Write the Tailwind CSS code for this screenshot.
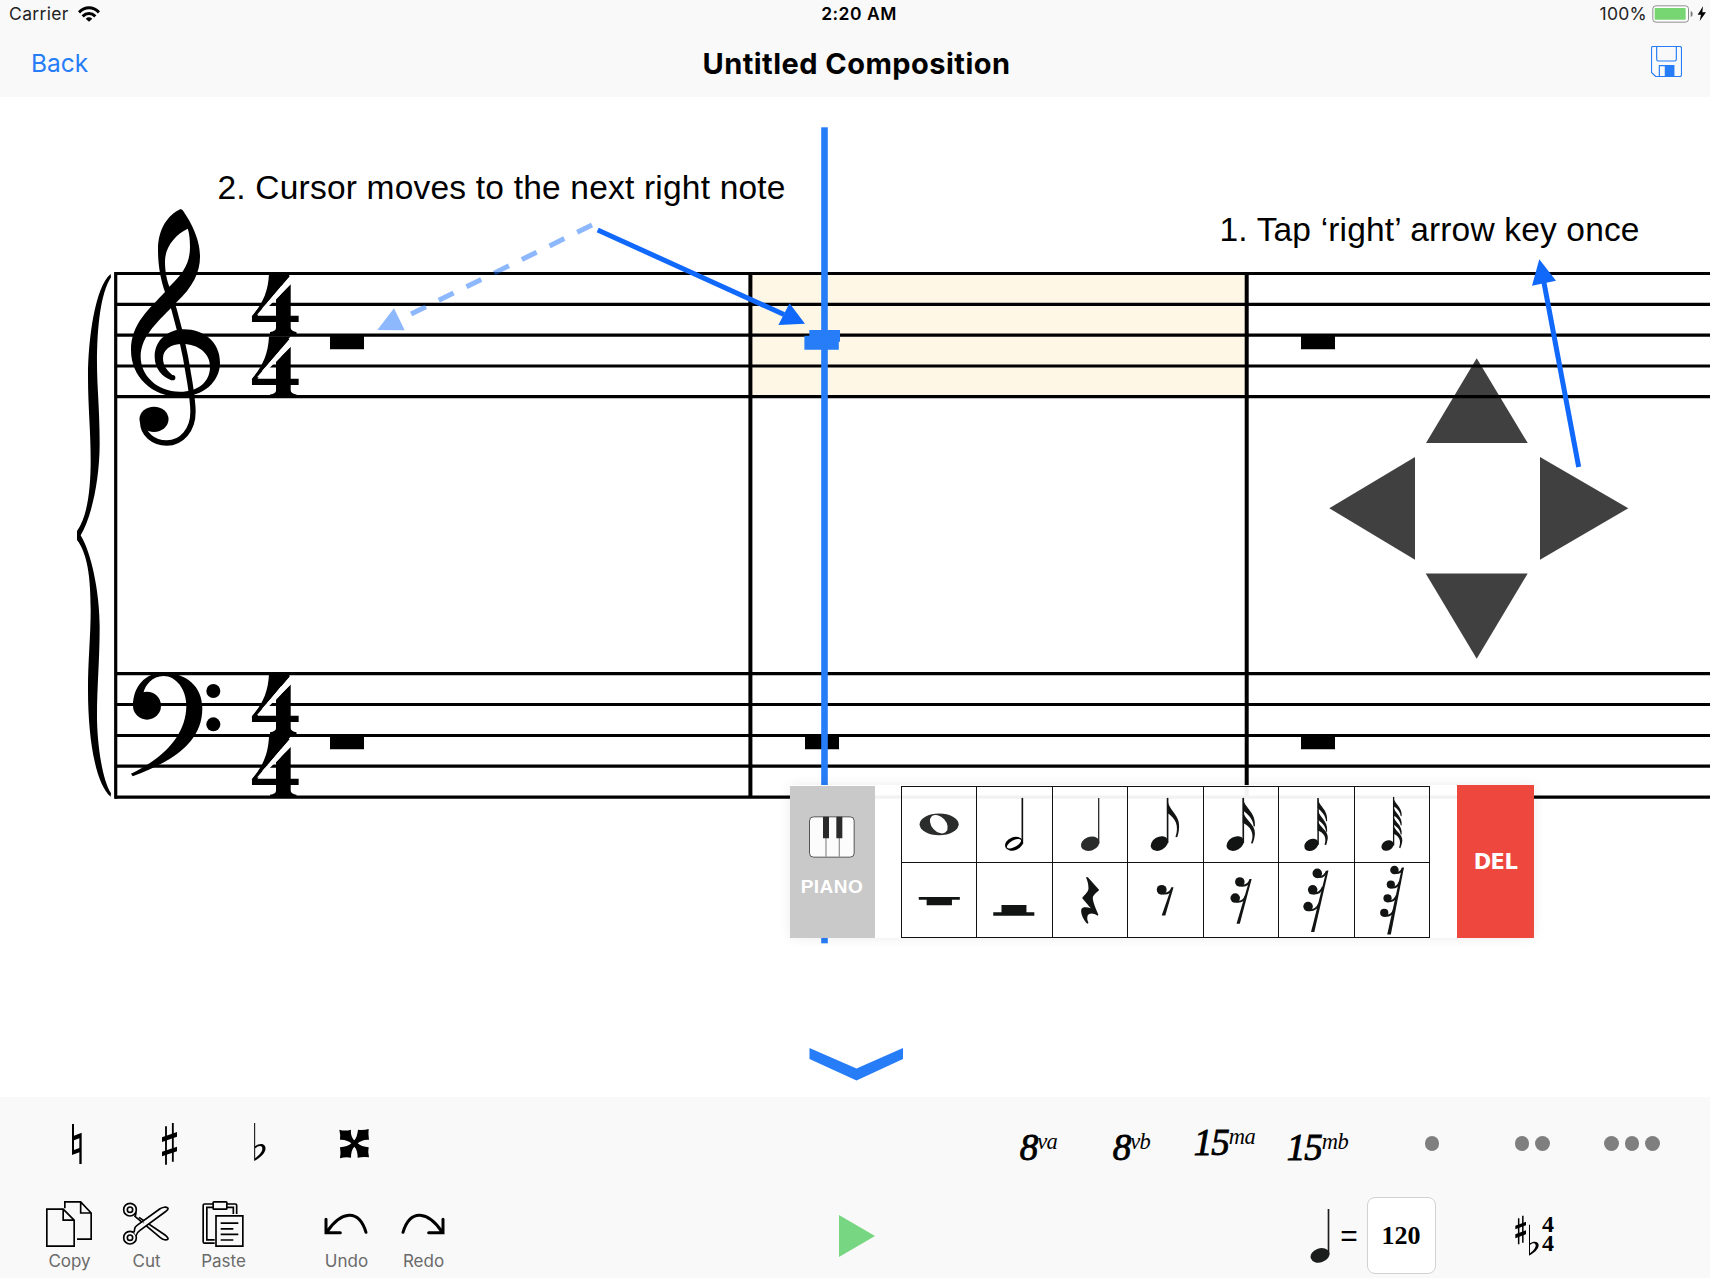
<!DOCTYPE html>
<html lang="en">
<head>
<meta charset="utf-8">
<title>Untitled Composition</title>
<script src="https://cdn.jsdelivr.net/npm/@tailwindcss/browser@4"></script>
</head>
<body class="flex h-[1278px] w-[1710px] flex-col overflow-hidden bg-white font-['Inter',sans-serif] text-black">

<header class="flex h-[97px] flex-none flex-col bg-[#f9f9f9]">
  <div class="grid h-7 grid-cols-3 items-center pl-[9px] pr-[4px] text-[18px] leading-none">
    <div class="flex items-center gap-[9px]">
      <span class="text-[17.5px] tracking-[0.35px] text-[#222]">Carrier</span>
      <svg class="h-[16px] w-[22px]" viewBox="233 16 66 48" fill="none" stroke="#000" stroke-width="9">
        <path d="M236 35 C254 17 278 17 296 35"/><path d="M247 47 C258 36 274 36 285 47"/>
        <path d="M256 54 Q266 46 276 54 L266 63Z" fill="#000" stroke="none"/>
      </svg>
    </div>
    <span class="pl-[3px] text-center text-[17.5px] font-semibold tracking-[0.5px]">2:20 AM</span>
    <div class="flex items-center justify-end gap-[5px]">
      <span class="text-[17.5px] tracking-[0.25px] text-[#222]">100%</span>
      <svg class="h-[18px] w-[54px]" viewBox="1114 15 162 54">
        <rect x="1116.500" y="17.500" width="107" height="49" rx="9" fill="#fff" stroke="#8d8d8d" stroke-width="3"/>
        <rect x="1122" y="24" width="93" height="35" rx="2" fill="#77d572"/>
        <path d="M1230 33 Q1236 35 1236 42 Q1236 49 1230 51Z" fill="#777"/>
        <path d="M1267 19 L1251 44 H1261 L1257 63 L1276 37 H1265Z" fill="#000"/>
      </svg>
    </div>
  </div>
  <div class="grid h-[69px] grid-cols-3 items-center pl-[31px] pr-[28px] pt-[2px]">
    <a class="text-[24.500px] text-[#277df7]">Back</a>
    <h1 class="text-center text-[29px] font-bold whitespace-nowrap tracking-[0.45px]">Untitled Composition</h1>
    <svg class="-mt-[4px] h-[31px] w-[31px] justify-self-end" viewBox="1113 138 93 93" fill="none" stroke="#277df7" stroke-width="3.500">
      <path d="M1119 139.500 H1199 Q1204.500 139.500 1204.500 145 V224 Q1204.500 229.500 1199 229.500 H1127 L1114.500 217 V145 Q1114.500 139.500 1119 139.500Z"/>
      <path d="M1130 140 V178 Q1130 183 1135 183 H1184 Q1189 183 1189 178 V140"/>
      <path d="M1138 229 V197 H1181 V229"/><path d="M1156 197 H1181 V229 H1156Z" fill="#277df7"/>
    </svg>
  </div>
</header>

<main class="relative h-[1000px] flex-none">
  <svg class="block h-[1000px] w-[1710px]" viewBox="0 97 1710 1000">
    <rect x="752" y="275" width="494" height="121" fill="#fef7e5"/>
    <!-- time signatures -->
    <g id="meter">
      <g id="beat">
        <text transform="translate(250 334) scale(1.13 1)" font-family="'Liberation Serif',serif" font-size="89">4</text>
        <path d="M290 276L291 284L276 299.300V314.700H257Z" fill="#fff"/>
        <path d="M269 274H290.500L256 314.700L251.500 317C263 303 268 292 269 274ZM276 299.500L290.700 284V328Q291 331 296.500 332V335H270V332Q276 331 276 328Z"/>
      </g>
      <use href="#beat" y="62.500"/>
    </g>
    <use href="#meter" y="400.300"/>
    <!-- staves -->
    <g stroke="#000" stroke-width="3.200">
      <path d="M115 273.500H1710M115 304.300H1710M115 335.200H1710M115 366H1710M115 396.700H1710"/>
      <path d="M115 673.700H1710M115 704.500H1710M115 735.500H1710M115 766.200H1710M115 797.200H1710"/>
      <path d="M115.700 272V798.700"/><path d="M750.400 272V798M1246.700 272V798" stroke-width="4"/>
    </g>
    <path d="M289.500 277L291 284L266 309L262 308.500Z M289.500 339.500L291 346.500L266 371.500L262 371Z M289.500 677.300L291 684.300L266 709.300L262 708.800Z M289.500 739.800L291 746.800L266 771.800L262 771.300Z" fill="#fff"/>
    <!-- brace and bass clef -->
    <g transform="translate(60 460) scale(.33333)">
      <path d="M152 -558 C105 -520 84 -360 84 -250 C84 -160 92 -90 92 0 C92 90 82 170 51 213 L51 240 C82 280 92 350 92 450 C92 530 84 600 84 690 C84 830 105 970 152 1010 L153 1000 C122 950 111 830 111 770 C111 680 119 600 119 500 C119 400 95 280 62 226 C95 170 119 60 119 -50 C119 -150 111 -220 111 -290 C111 -400 122 -500 153 -548Z"/>
      <circle cx="261" cy="737" r="42"/>
      <path d="M219 737 C219 680 255 638 310 638 C380 638 427 680 427 745 C427 850 335 905 218 949 L213 941 C320 890 377 820 379 740 C380 690 350 648 310 648 C278 648 255 675 250 700 L240 740Z"/>
      <circle cx="460" cy="693" r="21"/><circle cx="460" cy="793" r="21"/>
    </g>
    <!-- treble clef -->
    <g transform="translate(60 190) scale(.33333)">
      <path fill-rule="evenodd" d="M360 58 C325 75 294 115 294 180 C294 230 303 272 315 306 C270 355 213 400 213 480 C213 560 275 620 360 620 C430 620 480 575 480 518 C480 455 430 418 372 418 C325 418 284 450 284 500 C284 538 308 560 334 571 L345 560 C320 545 309 525 309 505 C309 480 330 462 368 462 C415 462 450 490 450 530 C450 575 415 605 360 605 C290 605 242 555 242 500 C242 435 300 390 348 338 C400 290 420 245 420 200 C420 140 385 85 368 61 Q364 56 360 58Z M383 116 C345 135 315 170 315 215 C315 245 321 272 328 290 C370 250 390 220 390 170 C390 145 387 125 383 116Z"/>
      <circle cx="338" cy="563" r="8"/>
      <path d="M322 295 C350 375 375 480 390 580 C396 620 399 640 399 665 C399 720 365 759 320 759 C280 759 248 732 248 695" fill="none" stroke="#000" stroke-width="16"/>
      <ellipse cx="282" cy="688" rx="43.500" ry="38"/>
    </g>
    <!-- whole-bar rests -->
    <path d="M330 335h34v14.300h-34zM1301 335h34v14.300h-34zM330 735h34v14.300h-34zM805 735h34v14.300h-34zM1301 735h34v14.300h-34z"/>
    <!-- cursor -->
    <g fill="#277df7">
      <rect x="821.200" y="127.300" width="6.600" height="816"/>
      <path d="M809.300 330H840V341.700H838.800V349.700H804.400V335.700H809.300Z"/>
    </g>
    <!-- d-pad -->
    <g fill="#000" fill-opacity=".75">
      <path d="M1476.700 358.300L1527.700 443H1426Z"/><path d="M1329.300 508.300L1415 457V559.700Z"/>
      <path d="M1628.300 508.300L1540 457V559.700Z"/><path d="M1476.700 658.700L1527.700 573.500H1425.700Z"/>
    </g>
    <!-- callouts -->
    <g fill="#1169fb" stroke="#1169fb">
      <path d="M597.700 230L784 314.500M1578.700 467L1543.500 280" stroke-width="5"/>
      <path d="M805 323.700L789.500 303.300L778.400 325Z M1539.300 259.300L1556 280.700L1532 285.700Z" stroke="none"/>
      <g opacity=".47"><path d="M592 225L410 314.500" stroke-width="5" stroke-dasharray="16.500 14.350"/><path d="M377.300 330L394 308.300L404.700 330.300Z" stroke="none"/></g>
    </g>
    <g font-family="'Liberation Sans',sans-serif" font-size="33.500">
      <text x="217.500" y="198.500" textLength="568">2. Cursor moves to the next right note</text>
      <text x="1219.500" y="240.700" textLength="420">1. Tap ‘right’ arrow key once</text>
    </g>
    <path d="M809.500 1048L856.500 1068.500L903 1048V1059L856.500 1080.500L809.500 1059Z" fill="#277df7"/>
  </svg>

  <!-- floating note palette -->
  <section class="absolute left-[790px] top-[688px] flex h-[153px] w-[744px] items-stretch bg-white/95 shadow-[0_0_12px_rgba(0,0,0,0.08)]">
    <button class="mt-px flex w-[85px] flex-col items-center bg-[#c6c6c6]/95 pt-[30px]">
      <svg class="-ml-px h-[42px] w-[46px]" viewBox="87 139 138 126">
        <rect x="88.500" y="141.500" width="134" height="121" rx="12" fill="#fff" fill-opacity=".95" stroke="#555" stroke-width="3"/>
        <path d="M138 200V262M178 200V262" stroke="#999" stroke-width="4"/>
        <path d="M129 141h18v65h-18zM169 141h18v65h-18z" fill="#2a2a2a"/>
      </svg>
      <span class="mt-[19px] -ml-px font-['Liberation_Sans',sans-serif] text-[19px] leading-5 font-bold tracking-[0.5px] text-white">PIANO</span>
    </button>
    <div class="mt-px ml-[26px] grid h-[152px] w-[529px] grid-cols-7 grid-rows-2 border-t border-l border-[#111] text-[#111413] *:border-r *:border-b *:border-[#111] [&_svg]:h-full [&_svg]:w-full">
      <button><svg viewBox="364 48 226.500 226.500" fill="#2b2d2c"><ellipse cx="477" cy="161.500" rx="59.500" ry="33"/><ellipse cx="476" cy="161" rx="22" ry="32" transform="rotate(-42 476 161)" fill="#fff"/></svg></button>
      <button><svg viewBox="590.500 48 226.500 226.500"><path d="M728.500 81V222" stroke="#111" stroke-width="5"/><ellipse cx="703" cy="220.500" rx="28" ry="20" transform="rotate(-22 703 220.500)"/><ellipse cx="703" cy="220.500" rx="24" ry="10" transform="rotate(-29 703 220.500)" fill="#fff"/></svg></button>
      <button><svg viewBox="817 48 226.500 226.500" fill="#2b2d2c"><path d="M956 81V220" stroke="#2b2d2c" stroke-width="4"/><ellipse cx="930" cy="220.500" rx="29" ry="21" transform="rotate(-20 930 220.500)"/></svg></button>
      <button><svg viewBox="-96.500 48 226.500 226.500" fill="currentColor"><path d="M24 81V218" stroke="currentColor" stroke-width="5"/><ellipse cx="-1" cy="220" rx="28" ry="20" transform="rotate(-30 -1 220)"/><path d="M22 81 C28 122 61 132 59 167 C59 182 56 193 53 201 L48 200 C60 165 48 142 22 126Z"/></svg></button>
      <button><svg viewBox="130 48 226.500 226.500" fill="currentColor"><path d="M249.500 81V218" stroke="currentColor" stroke-width="5"/><ellipse cx="225" cy="220" rx="28" ry="20" transform="rotate(-30 225 220)"/><path d="M248 81 C253 112 288 122 285 167 L281 168 C280 145 262 130 248 119Z"/><path d="M248 121 C255 150 286 160 285 190 C284 203 281 212 278 220 L273 219 C286 188 270 168 248 157Z"/></svg></button>
      <button><svg viewBox="356.500 48 226.500 226.500" fill="currentColor"><path d="M475.500 81V224" stroke="currentColor" stroke-width="4.500"/><ellipse cx="455" cy="224" rx="23" ry="17" transform="rotate(-30 455 224)"/><path d="M474 81 C480 110 506 115 503 152 L500 152 C498 133 485 122 474 112Z"/><path d="M474 115 C480 144 506 149 503 184 L500 184 C498 165 485 156 474 147Z"/><path d="M474 149 C480 172 506 178 505 203 C504 212 502 218 500 225 L495 223 C504 200 490 185 474 180Z"/></svg></button>
      <button><svg viewBox="583 48 226.500 226.500" fill="currentColor"><path d="M700.500 78V226" stroke="currentColor" stroke-width="4"/><ellipse cx="682" cy="226" rx="19.500" ry="15" transform="rotate(-30 682 226)"/><path d="M699 78 C704 102 728 108 725 137 L722 136 C720 120 708 112 699 105Z"/><path d="M699 106 C704 130 728 136 725 165 L722 164 C720 148 708 140 699 133Z"/><path d="M699 134 C704 158 728 162 725 193 L722 192 C720 174 708 168 699 161Z"/><path d="M699 162 C704 182 728 190 727 211 C726 220 724 227 721 234 L717 232 C726 210 715 195 699 190Z"/></svg></button>

      <button><svg viewBox="364 274.500 226.500 226.500" fill="currentColor"><path d="M415 378H540V386H516V403H439V386H415Z"/></svg></button>
      <button><svg viewBox="590.500 274.500 226.500 226.500" fill="currentColor"><path d="M640 424H665V402H741V424H765V435H640Z"/></svg></button>
      <button><svg viewBox="817 274.500 226.500 226.500" fill="currentColor"><path d="M917 318H923L957 356 C957 361 938 370 938 381 C938 392 948 415 955 432 L953 435 C940 426 925 425 922 436 C920 444 922 451 925 457 L921 459 C910 448 901 430 903 416 C905 408 920 408 932 412 L906 382 C906 376 924 366 925 352 C925 340 922 328 917 318Z"/></svg></button>
      <button><svg viewBox="1043.500 274.500 226.500 226.500" fill="currentColor"><circle cx="1146" cy="356" r="15"/><path d="M1176 348H1182L1157 434H1146Z"/><path d="M1150 367Q1171 370 1178 350" fill="none" stroke="currentColor" stroke-width="6"/></svg></button>
      <button><svg viewBox="130 274.500 226.500 226.500" fill="currentColor"><circle cx="239" cy="332" r="14.500"/><circle cx="225" cy="381" r="14.500"/><path d="M269 323H275L239 459H229Z"/><path d="M242 343Q264 346 271 325M228 392Q250 395 257 374" fill="none" stroke="currentColor" stroke-width="6"/></svg></button>
      <button><svg viewBox="356.500 274.500 226.500 226.500" fill="currentColor"><circle cx="473" cy="306" r="14.500"/><circle cx="459" cy="356" r="14.500"/><circle cx="445" cy="407" r="14.500"/><path d="M501 297H507L464 484H454Z"/><path d="M475 317Q495 319 502 299M461 367Q482 369 490 347M447 418Q470 420 479 397" fill="none" stroke="currentColor" stroke-width="6"/></svg></button>
      <button><svg viewBox="583 274.500 226.500 226.500" fill="currentColor"><circle cx="703" cy="296" r="13"/><circle cx="692" cy="340" r="12.500"/><circle cx="682" cy="382" r="12.500"/><circle cx="672" cy="426" r="12.500"/><path d="M726 288H732L692 492H681Z"/><path d="M705 305Q722 307 728 290M694 349Q712 351 719 332M684 391Q702 393 710 374M674 435Q694 437 702 416" fill="none" stroke="currentColor" stroke-width="6"/></svg></button>
    </div>
    <button class="ml-auto w-[77px] bg-[#ee473e] pt-[3px] font-['DejaVu_Sans',sans-serif] text-[21px] font-bold tracking-[-0.5px] text-white">DEL</button>
  </section>
</main>

<footer class="flex flex-1 flex-col bg-[#f9f9f9]">
  <div class="flex h-[92px] items-center pl-[30px] pr-[28px] pt-[2px]">
    <div class="grid grid-cols-4 *:w-[92px] *:h-[46px]">
      <svg viewBox="90 96 276 138"><path d="M216 105H222V140L245 131V225H238V190L216 198ZM222 154V183L238 177V148Z" fill-rule="evenodd"/></svg>
      <svg viewBox="366 96 276 138"><path d="M498 112V227M518.500 102V218" stroke="#000" stroke-width="5.500"/><path d="M486 145L531 129V143L486 159ZM486 188L531 173V187L486 202Z"/></svg>
      <svg viewBox="642 96 276 138"><path d="M762.500 102H765.500V172C778 161 798 162 796.500 180C795 195 778 208 762.500 216ZM765.500 178V208C778 198 788 188 787 177C786 168 775 169 765.500 178Z" fill-rule="evenodd"/></svg>
      <svg viewBox="918 93 276 138"><path d="M1018 119Q1035 124 1053 119C1051 135 1058 146 1063 151C1069 144 1072 135 1074 119Q1090 122 1106 117Q1104 133 1107 149C1090 148 1080 154 1073 160C1080 166 1092 171 1106 172Q1103 186 1107 202Q1090 200 1073 203C1073 188 1070 177 1063 170C1056 177 1053 188 1053 203Q1036 200 1020 205Q1023 188 1020 172C1035 171 1048 167 1054 160C1048 154 1035 148 1020 149Q1022 134 1018 119Z"/></svg>
    </div>
    <div class="ml-auto flex text-center font-['Liberation_Serif',serif] text-[37px] leading-none italic *:w-[93px] [&_b]:font-normal [&_b]:tracking-[-1px] [&_b]:[-webkit-text-stroke:0.9px_black] [&_sup]:relative [&_sup]:-top-[11px] [&_sup]:text-[22.500px] [&_sup]:tracking-[-0.5px]">
      <span class="pt-[6px]"><b>8</b><sup>va</sup></span>
      <span class="pt-[6px]"><b>8</b><sup>vb</sup></span>
      <span class="pt-px"><b>15</b><sup>ma</sup></span>
      <span class="pt-[6px]"><b>15</b><sup>mb</sup></span>
    </div>
    <div class="-mt-px ml-[18px] grid grid-cols-3 *:flex *:w-[100px] *:justify-center *:gap-[6px] [&_i]:h-[14.500px] [&_i]:w-[14.500px] [&_i]:rounded-full [&_i]:bg-[#7f7f7f]">
      <div><i></i></div><div><i></i><i></i></div><div><i></i><i></i><i></i></div>
    </div>
  </div>

  <div class="flex h-[89px] items-center pl-[31px] pt-[4px]">
    <div class="flex text-[17px] leading-5 text-[#6a6a6a] *:flex *:w-[77px] *:flex-col *:items-center *:gap-[3px] [&_svg]:-ml-px [&_svg]:h-[48px] [&_svg]:w-[60px]">
      <button><svg viewBox="117 330 180 144" fill="none" stroke="#000" stroke-width="5"><path d="M194.500 355V335.500H242L273.500 369V447.500H231M242 335V369H274M140.500 357.500H189.500L222.500 390.500V468.500H140.500ZM189.500 357V390.500H222"/></svg>Copy</button>
      <button><svg viewBox="349 330 180 144" fill="#f9f9f9" stroke="#000" stroke-width="5"><circle cx="391" cy="359" r="19"/><circle cx="391" cy="359" r="8"/><circle cx="391" cy="443" r="19"/><circle cx="391" cy="443" r="8"/><path d="M409 365C409 371 408 376 406 379L482 443C490 450 500 451 504 448C508 445 500 438 496 435L418 382"/><path d="M409 437C411 430 414 426 420 422L496 366C500 363 508 357 504 354C500 350 488 351 480 357L412 406C400 414 408 420 402 427"/><circle cx="432" cy="398" r="1.500" fill="#000" stroke="none"/></svg>Cut</button>
      <button><svg viewBox="581 330 180 144" fill="none" stroke="#000" stroke-width="5"><path d="M641 342H616Q611.500 342 611.500 346V455Q611.500 459.500 616 459.500H646M683 342H708Q712 342 712 346V372M641 352H622.500V449.500H646M683 352H702V372"/><rect x="641.500" y="335.500" width="41" height="22" rx="2"/><path d="M650 377.500H730.500V468.500H650ZM664 399.500H717M664 416.500H702M664 433H717M664 450H702"/></svg>Paste</button>
    </div>
    <div class="ml-[46px] flex text-[17px] leading-5 text-[#6a6a6a] *:flex *:w-[77px] *:flex-col *:items-center *:gap-[3px] [&_svg]:-ml-px [&_svg]:h-[48px] [&_svg]:w-[60px]">
      <button><svg viewBox="950 330 180 144" fill="none" stroke="#000" stroke-width="9" stroke-linecap="round"><path d="M980 388V428.500H1023M982 427C1025 363 1078 355 1100 427"/></svg>Undo</button>
      <button><svg viewBox="1181 330 180 144" fill="none" stroke="#000" stroke-width="9" stroke-linecap="round"><path d="M1331 388V428.500H1288M1329 427C1286 363 1233 355 1211 427"/></svg>Redo</button>
    </div>
    <svg class="ml-[377px] h-[42px] w-[36px]" viewBox="0 0 36 42"><path d="M0 0L36 21L0 42Z" fill="#77d681"/></svg>
    <div class="ml-[435px] flex items-center">
      <svg class="h-[54px] w-[20px]" viewBox="991 357 60 162" fill="#1c1e1d"><path d="M1046.500 357V495" stroke="#1c1e1d" stroke-width="5"/><ellipse cx="1021" cy="496" rx="29" ry="21" transform="rotate(-18 1021 496)"/></svg>
      <span class="ml-[8px] w-[22px] text-center font-['Liberation_Sans',sans-serif] text-[30px] leading-none">=</span>
      <input class="ml-[7px] h-[77px] w-[69px] rounded-lg border border-[#d2d2d2] bg-white pr-px text-center font-['Liberation_Serif',serif] text-[26px] font-bold" value="120">
    </div>
    <div class="ml-[79px] flex h-[42px] items-start">
      <svg class="h-[42px] w-[25px]" viewBox="555 376 75 126"><path d="M566 386V464M578.500 378V459" stroke="#000" stroke-width="4.500"/><path d="M556 408L588 396V407L556 419ZM556 434L588 422V434L556 446Z"/><path d="M597 405H600V461C610 453 627 454 626 468C624 481 610 490 597 498ZM600 466V491C610 483 618 474 617 466C615 458 606 460 600 466Z" fill-rule="evenodd"/></svg>
      <span class="ml-[2px] flex flex-col font-['Liberation_Serif',serif] text-[24px] leading-[19px] font-bold"><span>4</span><span>4</span></span>
    </div>
  </div>
</footer>
</body>
</html>
